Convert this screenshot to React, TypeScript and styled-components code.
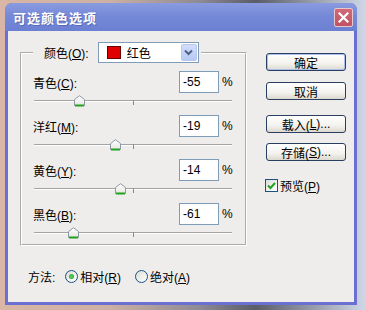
import styled, { createGlobalStyle } from 'styled-components';

const GlobalStyle = createGlobalStyle`
  html, body {
    margin: 0;
    padding: 0;
  }
  body {
    width: 365px;
    height: 310px;
    overflow: hidden;
    background: linear-gradient(to right, #d9b6a6 0, #cdb0a4 30%, #8c8a94 55%, #5a5c68 70%, #cfd6e6 100%);
    font-family: "Liberation Sans", "Noto Sans CJK SC", sans-serif;
    font-size: 12px;
    color: #000;
  }
`;

const Page = styled.div`
  padding: 3px 0 0 5px;
`;

const Window = styled.div`
  width: 352px;
  height: 302px;
  box-sizing: border-box;
  display: flex;
  flex-direction: column;
  background: #6b6fd1;
  border-radius: 7px 7px 0 0;
  padding: 0 3px 3px 3px;
  overflow: hidden;
`;

const TitleBar = styled.div`
  height: 28px;
  margin: 0 -3px;
  padding: 0 4px 0 8px;
  display: flex;
  align-items: center;
  justify-content: space-between;
  background: linear-gradient(#8a9be0, #7689d7 45%, #6c80d3);
`;

const Title = styled.span`
  color: #fff;
  font-weight: bold;
  font-size: 13px;
  letter-spacing: 1px;
  text-shadow: 1px 1px 0 rgba(40, 50, 120, 0.35);
`;

const CloseButton = styled.div`
  width: 19px;
  height: 19px;
  box-sizing: border-box;
  border: 1px solid #e9c7cf;
  border-radius: 2px;
  background: linear-gradient(#d06b78, #bf5262);
  display: flex;
  align-items: center;
  justify-content: center;
`;

const Body = styled.div`
  flex: 1;
  background: #eeedeb;
  display: flex;
`;

const LeftColumn = styled.div`
  display: flex;
  flex-direction: column;
  padding-left: 12px;
`;

const Group = styled.fieldset`
  width: 227px;
  box-sizing: border-box;
  margin: 11px 0 0 0;
  padding: 8px 11px 3px 11px;
  border: 2px groove #ffffff;
  min-width: 0;
`;

const Legend = styled.legend`
  margin-left: 0;
  padding: 0 2px 0 11px;
  display: flex;
  align-items: center;
  gap: 9px;
`;

const Select = styled.div`
  width: 101px;
  height: 21px;
  box-sizing: border-box;
  border: 1px solid #7f9db9;
  background: #fff;
  display: flex;
  align-items: center;
  padding: 0 1px 0 8px;
`;

const Swatch = styled.span`
  width: 14px;
  height: 13px;
  box-sizing: border-box;
  background: #e00000;
  border: 1px solid #600;
`;

const SelectText = styled.span`
  flex: 1;
  margin-left: 6px;
`;

const DropButton = styled.span`
  width: 16px;
  height: 17px;
  border-radius: 2px;
  background: linear-gradient(#d3defc, #b6c8f5);
  border: 1px solid #b9c8ee;
  box-sizing: border-box;
  display: flex;
  align-items: center;
  justify-content: center;
`;

const Row = styled.div`
  display: flex;
  flex-direction: column;
  margin-bottom: 6px;
  &:last-child {
    margin-bottom: 0;
  }
`;

const TopLine = styled.div`
  height: 22px;
  display: flex;
  align-items: center;
`;

const Label = styled.span`
  flex: 1;
`;

const NumberBox = styled.div`
  width: 40px;
  height: 22px;
  box-sizing: border-box;
  border: 1px solid #7f9db9;
  background: #fff;
  padding-left: 3px;
  display: flex;
  align-items: center;
`;

const Percent = styled.span`
  width: 12px;
  margin-left: 3px;
`;

const SliderLine = styled.div`
  height: 16px;
  padding-left: 1px;
`;

const Track = styled.div`
  position: relative;
  width: 198px;
  height: 2px;
  margin-top: 7px;
  border-top: 1px solid #a3a3a3;
  border-bottom: 1px solid #ffffff;
  box-sizing: border-box;
  background: #d8d8d8;
`;

const Tick = styled.span`
  position: absolute;
  left: 99px;
  top: -1px;
  width: 1px;
  height: 5px;
  background: #8a8a8a;
`;

const Thumb = styled.svg`
  position: absolute;
  top: -6px;
`;

const MethodRow = styled.div`
  margin-top: 23px;
  margin-left: 8px;
  display: flex;
  align-items: center;
  height: 14px;
`;

const MethodLabel = styled.span`
  margin-right: 10px;
`;

const Radio = styled.span<{ $checked?: boolean }>`
  width: 13px;
  height: 13px;
  box-sizing: border-box;
  border-radius: 50%;
  border: 1px solid #1c5180;
  background: linear-gradient(135deg, #dcdcd6, #ffffff);
  display: flex;
  align-items: center;
  justify-content: center;
  margin-right: 2px;
  &::after {
    content: '';
    display: ${(p) => (p.$checked ? 'block' : 'none')};
    width: 5px;
    height: 5px;
    border-radius: 50%;
    background: radial-gradient(#5fd35f, #21a121);
  }
`;

const RadioText = styled.span`
  margin-right: 14px;
`;

const RightColumn = styled.div`
  display: flex;
  flex-direction: column;
  padding: 22px 0 0 19px;
`;

const Button = styled.div<{ $gap: number; $primary?: boolean }>`
  width: 80px;
  height: 18px;
  box-sizing: border-box;
  margin-top: ${(p) => p.$gap}px;
  border: 1px solid #2a3f60;
  border-radius: 3px;
  background: linear-gradient(#ffffff, #f3f2ee 60%, #dcd8ce);
  box-shadow: ${(p) => (p.$primary ? 'inset 0 0 0 1px #a9c1ec' : 'none')};
  display: flex;
  align-items: center;
  justify-content: center;
`;

const CheckRow = styled.div`
  margin-top: 16px;
  margin-left: -1px;
  display: flex;
  align-items: center;
  gap: 2px;
`;

const CheckBox = styled.span`
  width: 13px;
  height: 13px;
  box-sizing: border-box;
  border: 1px solid #1c5180;
  background: linear-gradient(135deg, #dcdcd6, #ffffff);
  display: flex;
  align-items: center;
  justify-content: center;
`;

const rows = [
  { name: '青色', key: 'C', value: -55 },
  { name: '洋红', key: 'M', value: -19 },
  { name: '黄色', key: 'Y', value: -14 },
  { name: '黑色', key: 'B', value: -61 },
];

function SliderThumb({ value }: { value: number }) {
  return (
    <Thumb width="11" height="12" viewBox="0 0 11 12" style={{ left: value + 100 - 5.5 }}>
      <defs>
        <linearGradient id="thumbFill" x1="0" y1="0" x2="0" y2="1">
          <stop offset="0" stopColor="#ffffff" />
          <stop offset="1" stopColor="#e6e6e0" />
        </linearGradient>
      </defs>
      <path d="M0.5 4.5 L5.5 0.7 L10.5 4.5 V10.5 H0.5 Z" fill="url(#thumbFill)" stroke="#8c98a4" />
      <path d="M1 10.5 H10" stroke="#21a121" strokeWidth="2" />
    </Thumb>
  );
}

export default function App() {
  return (
    <>
      <GlobalStyle />
      <Page>
        <Window>
          <TitleBar>
            <Title>可选颜色选项</Title>
            <CloseButton>
              <svg width="11" height="11" viewBox="0 0 11 11">
                <path d="M1.5 1.5 L9.5 9.5 M9.5 1.5 L1.5 9.5" stroke="#fff" strokeWidth="2.2" strokeLinecap="square" />
              </svg>
            </CloseButton>
          </TitleBar>
          <Body>
            <LeftColumn>
              <Group>
                <Legend>
                  <span>颜色(<u>O</u>):</span>
                  <Select>
                    <Swatch />
                    <SelectText>红色</SelectText>
                    <DropButton>
                      <svg width="9" height="7" viewBox="0 0 9 7">
                        <path d="M1 1.5 L4.5 5 L8 1.5" fill="none" stroke="#4d6185" strokeWidth="2" />
                      </svg>
                    </DropButton>
                  </Select>
                </Legend>
                {rows.map((r) => (
                  <Row key={r.key}>
                    <TopLine>
                      <Label>
                        {r.name}(<u>{r.key}</u>):
                      </Label>
                      <NumberBox>{r.value}</NumberBox>
                      <Percent>%</Percent>
                    </TopLine>
                    <SliderLine>
                      <Track>
                        <Tick />
                        <SliderThumb value={r.value} />
                      </Track>
                    </SliderLine>
                  </Row>
                ))}
              </Group>
              <MethodRow>
                <MethodLabel>方法:</MethodLabel>
                <Radio $checked />
                <RadioText>相对(<u>R</u>)</RadioText>
                <Radio />
                <RadioText>绝对(<u>A</u>)</RadioText>
              </MethodRow>
            </LeftColumn>
            <RightColumn>
              <Button $gap={0} $primary>确定</Button>
              <Button $gap={11}>取消</Button>
              <Button $gap={15}>载入(<u>L</u>)...</Button>
              <Button $gap={10}>存储(<u>S</u>)...</Button>
              <CheckRow>
                <CheckBox>
                  <svg width="9" height="9" viewBox="0 0 9 9">
                    <path d="M1 4.5 L3.5 7 L8 2" fill="none" stroke="#21a121" strokeWidth="2" />
                  </svg>
                </CheckBox>
                <span>预览(<u>P</u>)</span>
              </CheckRow>
            </RightColumn>
          </Body>
        </Window>
      </Page>
    </>
  );
}
